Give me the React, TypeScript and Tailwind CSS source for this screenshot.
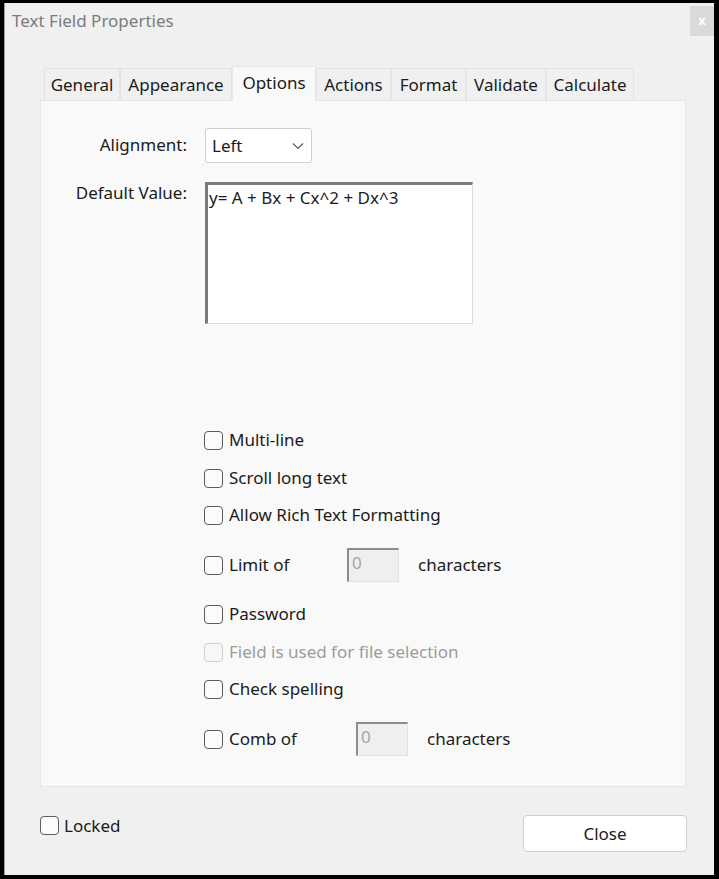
import React from 'react';

const FONT = { fontFamily: '"Noto Sans", "Open Sans", sans-serif' };

const TABS = [
  { name: 'General', w: 'w-[76px]' },
  { name: 'Appearance', w: 'w-[112px]' },
  { name: 'Options', w: 'w-[84px]', active: true },
  { name: 'Actions', w: 'w-[75px]' },
  { name: 'Format', w: 'w-[75px]' },
  { name: 'Validate', w: 'w-[80px]' },
  { name: 'Calculate', w: 'w-[88px]' },
];

function Box({ disabled }: { disabled?: boolean }) {
  return (
    <span
      className={
        'inline-block w-[19px] h-[19px] rounded-[4px] border-[1.5px] shrink-0 ' +
        (disabled ? 'border-[#cfcfcf] bg-[#f7f7f7]' : 'border-[#5c5c5c] bg-[#fbfbfb]')
      }
    />
  );
}

function Check({ label, disabled, className = '' }: { label: string; disabled?: boolean; className?: string }) {
  return (
    <div className={'flex items-center h-[24px] gap-[6px] ' + className}>
      <Box disabled={disabled} />
      <span className={disabled ? 'text-[#9c9c9c]' : 'text-[#1b1b1b]'}>{label}</span>
    </div>
  );
}

function Spin({ label, inputMl, className = '' }: { label: string; inputMl: string; className?: string }) {
  return (
    <div className={'flex items-center h-[34px] ' + className}>
      <Box />
      <span className="ml-[6px] text-[#1b1b1b] w-[80px]">{label}</span>
      <div
        className={
          'w-[52px] h-[34px] bg-[#efefef] border-t-2 border-l-2 border-t-[#8c8c8c] border-l-[#8c8c8c] border-b border-r border-b-[#e2e2e2] border-r-[#e2e2e2] pl-[3px] text-[#a5a5a5] leading-[26px] ' +
          inputMl
        }
      >
        0
      </div>
      <span className="ml-[19px] text-[#1b1b1b]">characters</span>
    </div>
  );
}

export default function App() {
  return (
    <div className="w-[719px] h-[879px] bg-black pt-[3px] pl-[4px] pr-[5px] pb-[4px] text-[17px]" style={FONT}>
      <div className="w-full h-full bg-[#f0f0f0] border-l border-l-[#9a9a9a] flex flex-col">
        {/* Title bar */}
        <div className="flex items-start justify-between h-[63px]">
          <div className="pl-[7px] pt-[5px] text-[#7b7b7b] text-[17px]">Text Field Properties</div>
          <div className="mt-[3px] w-[24px] h-[30px] bg-[#dadada] flex items-center justify-center text-white text-[13px] font-bold">
            x
          </div>
        </div>

        {/* Tabs */}
        <div className="flex items-end h-[34px] ml-[39px]">
          {TABS.map(t =>
            t.active ? (
              <div
                key={t.name}
                className={t.w + ' h-[35px] bg-[#f9f9f9] border border-b-0 border-[#e6e6e6] flex items-center justify-center text-[#1b1b1b] -mb-px relative z-10 pb-[3px]'}
              >
                {t.name}
              </div>
            ) : (
              <div
                key={t.name}
                className={t.w + ' h-[32px] bg-[#f0f0f0] border border-b-0 border-[#e4e4e4] flex items-center justify-center text-[#1b1b1b]'}
              >
                {t.name}
              </div>
            )
          )}
        </div>

        {/* Panel */}
        <div className="ml-[35px] mr-[28px] h-[687px] bg-[#f9f9f9] border border-[#e6e6e6] flex flex-col">
          <div className="flex mt-[27px] items-center">
            <div className="w-[146px] text-right text-[#1b1b1b] -mt-[2px]">Alignment:</div>
            <div className="ml-[18px] w-[107px] h-[35px] bg-white border border-[#cfcfcf] rounded-[3px] flex items-center justify-between px-[6px]">
              <span className="text-[#1b1b1b]">Left</span>
              <svg width="12" height="8" viewBox="0 0 12 8" className="mr-[1px]">
                <path d="M1 1.5 L6 6.5 L11 1.5" fill="none" stroke="#5a5a5a" strokeWidth="1.2" />
              </svg>
            </div>
          </div>
          <div className="flex mt-[19px]">
            <div className="w-[146px] text-right text-[#1b1b1b] -mt-[2px]">Default Value:</div>
            <div className="ml-[18px] w-[268px] h-[142px] bg-white border-t-[3px] border-l-[3px] border-t-[#7a7a7a] border-l-[#7a7a7a] border-b border-r border-b-[#dcdcdc] border-r-[#dcdcdc] px-[1px] leading-[26px] text-[#1b1b1b]">
              y= A + Bx + Cx^2 + Dx^3
            </div>
          </div>

          <div className="ml-[163px] flex flex-col">
            <Check label="Multi-line" className="mt-[104px]" />
            <Check label="Scroll long text" className="mt-[14px]" />
            <Check label="Allow Rich Text Formatting" className="mt-[13px]" />
            <Spin label="Limit of" inputMl="ml-[38px]" className="mt-[21px]" />
            <Check label="Password" className="mt-[20px]" />
            <Check label="Field is used for file selection" disabled className="mt-[14px]" />
            <Check label="Check spelling" className="mt-[13px]" />
            <Spin label="Comb of" inputMl="ml-[47px]" className="mt-[21px]" />
          </div>
        </div>

        {/* Footer */}
        <div className="flex items-start justify-between ml-[35px] mr-[27px] mt-[28px]">
          <div className="flex items-center gap-[5px] -mt-[2px]">
            <Box />
            <span className="text-[#1b1b1b]">Locked</span>
          </div>
          <div className="w-[164px] h-[37px] bg-white border border-[#cfcfcf] rounded-[4px] flex items-center justify-center text-[#1b1b1b]">
            Close
          </div>
        </div>
      </div>
    </div>
  );
}
